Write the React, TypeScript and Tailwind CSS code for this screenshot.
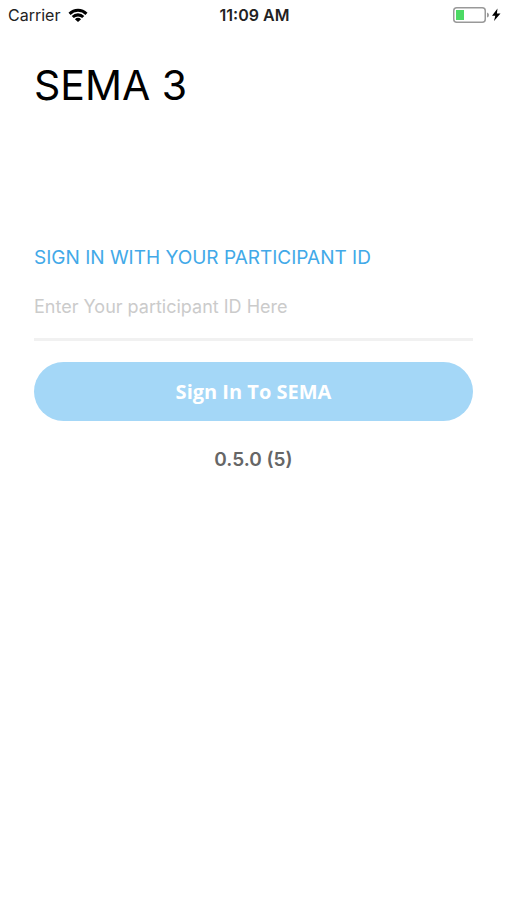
export default function App() {
  return (
    <div className="min-h-screen bg-white font-['Inter',sans-serif] text-black">
      <header className="grid h-[30px] grid-cols-3 items-center pr-1.5 pl-2 text-base text-[#222]">
        <div className="flex items-center gap-2">
          <span>Carrier</span>
          <svg className="h-[15px] w-5" viewBox="0 0 20 15" aria-label="Wi-Fi">
            <path d="M0.5 4.7 A13.5 13.5 0 0 1 19.5 4.7 L17.4 6.9 A10.4 10.4 0 0 0 2.6 6.9Z" />
            <path d="M3.7 8 A8.8 8.8 0 0 1 16.3 8 L14.2 10.1 A6 6 0 0 0 5.8 10.1Z" />
            <path d="M6.9 11.2 A4.5 4.5 0 0 1 13.1 11.2 L10 14.1Z" />
          </svg>
        </div>
        <span className="text-center font-semibold">11:09 AM</span>
        <div className="flex items-center justify-end">
          <svg className="h-4 w-12" viewBox="0 0 48 16" aria-label="Battery charging">
            <rect x="0.75" y="0.75" width="31.5" height="14.5" rx="3" fill="none" stroke="#999" strokeWidth="1.5" />
            <rect x="3" y="3" width="8" height="10" fill="#4cd964" />
            <path d="M34 5.5q2 .5 2 2.5t-2 2.5z" fill="#999" />
            <path d="M44.5 1.5 L39 8.8 H42.3 L41 14 L47.5 6.5 H43.9Z" fill="#000" />
          </svg>
        </div>
      </header>
      <main className="px-[34px] pt-[30px]">
        <h1 className="text-[41px] leading-[50px]">SEMA 3</h1>
        <form className="mt-[136px]">
          <label htmlFor="participant" className="block text-[19px] leading-6 text-[#42a9e8]">SIGN IN WITH YOUR PARTICIPANT ID</label>
          <input id="participant" placeholder="Enter Your participant ID Here" className="mt-1 block h-[67px] w-full border-b-[3px] border-[#f1f1f1] text-lg outline-none placeholder:text-[#cbcbcb]" />
          <button type="button" className="mt-[21px] block h-[59px] w-full rounded-full bg-[#a4d7f7] font-['Open_Sans',sans-serif] text-xl font-bold text-white">Sign In To SEMA</button>
        </form>
        <p className="mt-[25px] text-center text-[19px] leading-7 font-semibold text-[#666]">0.5.0 (5)</p>
      </main>
    </div>
  );
}
